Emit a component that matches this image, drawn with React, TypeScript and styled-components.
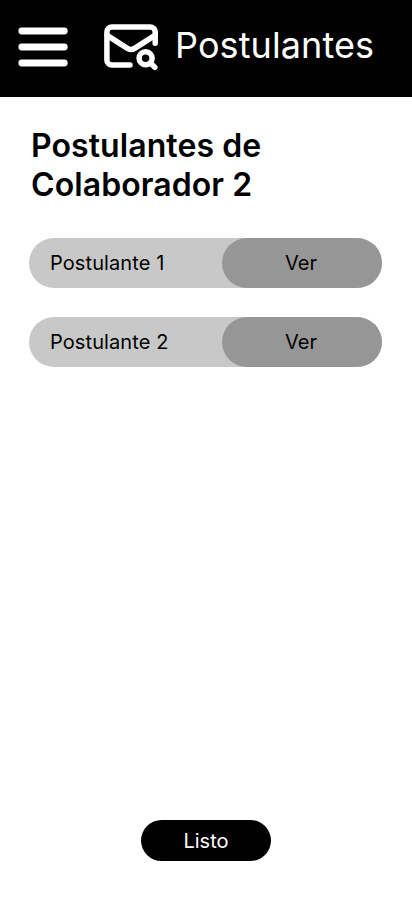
import React from 'react';
import styled, { createGlobalStyle } from 'styled-components';

const GlobalStyle = createGlobalStyle`
  * { box-sizing: border-box; }
  body {
    margin: 0;
    background: #fff;
    font-family: Inter, sans-serif;
    color: #000;
  }
  button { font: inherit; border: 0; padding: 0; cursor: pointer; }
`;
const Screen = styled.div`
  width: 412px;
  height: 917px;
  display: flex;
  flex-direction: column;
  background: #fff;
`;
const Header = styled.header`
  height: 97px;
  display: flex;
  align-items: center;
  background: #000;
  color: #fff;
  padding: 0 0 3px 18px;
`;
const MenuButton = styled.button`
  width: 50px;
  height: 40px;
  background: none;
  color: inherit;
  svg { display: block; }
`;
const MailIcon = styled.svg`
  width: 64px;
  height: 64px;
  margin-left: 31px;
`;
const HeaderTitle = styled.span`
  font-size: 36px;
  line-height: 44px;
  margin: -4px 0 0 12px;
  letter-spacing: 0.1px;
`;
const Main = styled.main`
  flex: 1;
  display: flex;
  flex-direction: column;
  padding: 29px 30px 56px 29px;
`;
const Heading = styled.h1`
  margin: 0 0 34px 2px;
  font-size: 32px;
  line-height: 39px;
  font-weight: 600;
  letter-spacing: 0.08px;
`;
const List = styled.div`
  display: flex;
  flex-direction: column;
  gap: 29px;
`;
const Row = styled.div`
  height: 50px;
  display: flex;
  align-items: center;
  justify-content: space-between;
  padding-left: 21px;
  border-radius: 25px;
  background: #c8c8c8;
  font-size: 20px;
`;
const ApplicantName = styled.span`
  letter-spacing: 0.1px;
`;
const ViewButton = styled.button`
  width: 160px;
  height: 50px;
  border-radius: 25px;
  background: #969696;
  color: #000;
  padding-right: 2px;
`;
const DoneButton = styled.button`
  width: 130px;
  height: 41px;
  margin: auto 0 0 112px;
  border-radius: 20.5px;
  background: #000;
  color: #fff;
  font-size: 20px;
`;

const applicants = ['Postulante 1', 'Postulante 2'];

export default function App() {
  return (
    <Screen>
      <GlobalStyle />
      <Header>
        <MenuButton aria-label="Menu">
          <svg width="50" height="40" viewBox="0 0 50 40" stroke="#fff" strokeWidth="6.800" strokeLinecap="round">
            <path d="M3.800 4h42.500M3.800 20h42.500M3.800 36h42.500" />
          </svg>
        </MenuButton>
        <MailIcon viewBox="0 0 64 64" fill="none" stroke="#fff" strokeWidth="5.500" strokeLinecap="round" strokeLinejoin="round">
          <path d="M56.200 28.300V17a4.900 4.900 0 0 0-4.900-4.900H12.800A4.900 4.900 0 0 0 7.900 17v28.200a4.900 4.900 0 0 0 4.900 4.800H31" />
          <path d="M8.500 20.600 28 33.100a7.200 7.200 0 0 0 8 0L55.500 20.600" />
          <circle cx="46.600" cy="43.300" r="6.500" />
          <path d="M51.200 47.800 55.800 52.300" />
        </MailIcon>
        <HeaderTitle>Postulantes</HeaderTitle>
      </Header>
      <Main>
        <Heading>Postulantes de<br />Colaborador 2</Heading>
        <List>
          {applicants.map((name) => (
            <Row key={name}>
              <ApplicantName>{name}</ApplicantName>
              <ViewButton>Ver</ViewButton>
            </Row>
          ))}
        </List>
        <DoneButton>Listo</DoneButton>
      </Main>
    </Screen>
  );
}
